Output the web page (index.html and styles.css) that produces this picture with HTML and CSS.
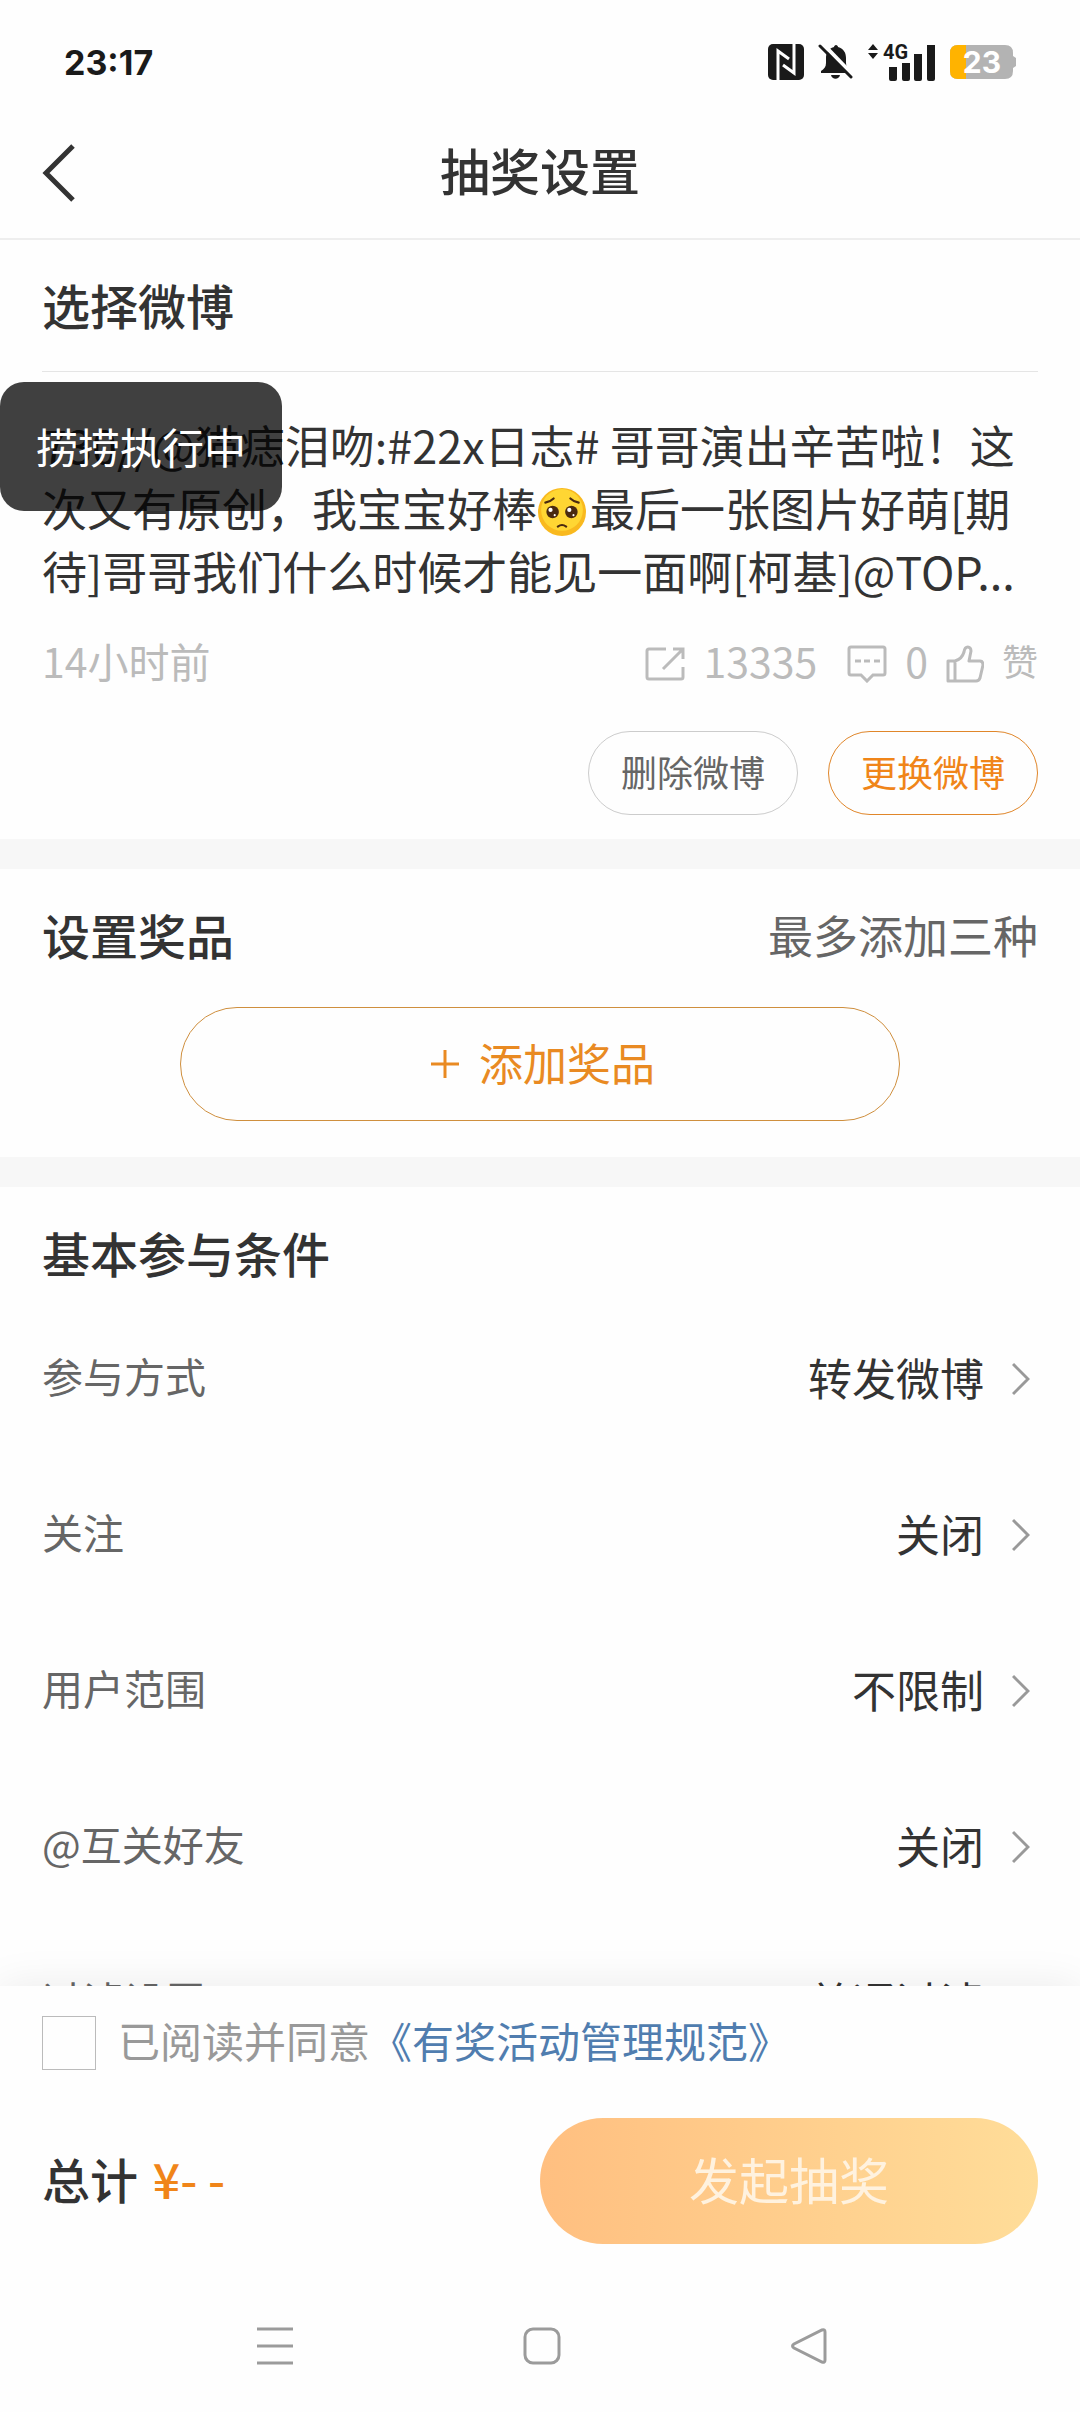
FILE: index.html
```html
<!DOCTYPE html>
<html lang="zh-CN">
<head>
    <meta charset="UTF-8">
    <meta name="viewport" content="width=device-width, initial-scale=1.0">
    <title>抽奖设置</title>
    <link rel="stylesheet" href="styles.css">
</head>
<body>
    <div class="status-bar">
        <span class="time">23:17</span>
        <div class="status-icons">
            <svg width="36" height="36" viewBox="0 0 36 36">
                <rect width="36" height="36" rx="5" fill="#1a1a1a"/>
                <path d="M10 36V7l11 8M26 0v29L15 21" fill="none" stroke="#fff" stroke-width="3"/>
            </svg>
            <svg width="36" height="36" viewBox="0 0 36 36">
                <path d="M18 1c1 0 2 1 2 2 6 2 8 6 8 11v5c0 4 2 6 5 8v2H3v-2c3-2 5-4 5-8v-5c0-5 2-9 8-11 0-1 1-2 2-2z" fill="#1a1a1a"/>
                <path d="M13 31h9c-1 5-8 5-9 0z" fill="#1a1a1a"/>
                <path d="M5 0l31 32" stroke="#fff" stroke-width="4"/>
                <path d="M2 2l31 31" stroke="#1a1a1a" stroke-width="3" stroke-linecap="round"/>
            </svg>
            <svg width="68" height="38" viewBox="0 0 68 38">
                <path d="M0 7l5-6 5 6zM0 10l5 6 5-6z" fill="#1a1a1a"/>
                <text x="15" y="16" class="network">4G</text>
                <path d="M21 24h8v12a2 2 0 0 1-2 2h-4a2 2 0 0 1-2-2zM34 20h8v16a2 2 0 0 1-2 2h-4a2 2 0 0 1-2-2zM46 11h8v25a2 2 0 0 1-2 2h-4a2 2 0 0 1-2-2zM59 2h8v34a2 2 0 0 1-2 2h-4a2 2 0 0 1-2-2z" fill="#1a1a1a"/>
            </svg>
            <svg width="66" height="36" viewBox="0 0 66 36">
                <path d="M8 1h47q8 0 8 8v3l3 2v8l-3 2v3q0 8-8 8H8q-8 0-8-8V9q0-8 8-8z" fill="#b3b3b3"/>
                <path d="M16 1H8Q0 1 0 9v18q0 8 8 8h8z" fill="#ffb300"/>
                <text x="32" y="29" class="battery-level">23</text>
            </svg>
        </div>
    </div>

    <header class="header">
        <button type="button" class="back-button" aria-label="返回">
            <svg width="34" height="58" viewBox="0 0 34 58">
                <path d="M31 2L4 29l27 27" fill="none" stroke="#333" stroke-width="5"/>
            </svg>
        </button>
        <h1>抽奖设置</h1>
    </header>

    <main>
        <section class="section">
            <h2 class="post-title">选择微博</h2>
            <p class="post-text">730//@猫痣泪吻:#22x日志# 哥哥演出辛苦啦！这<br>次又有原创，我宝宝好棒<svg class="emoji" width="48" height="48" viewBox="0 0 46 46" role="img" aria-label="🥺">
                <circle cx="23" cy="23" r="23" fill="#f9b91e"/>
                <circle cx="23" cy="21" r="20" fill="#ffd633"/>
                <circle cx="14" cy="23" r="6" fill="#4a2a10"/>
                <circle cx="32" cy="23" r="6" fill="#4a2a10"/>
                <circle cx="12" cy="21" r="2" fill="#fff"/>
                <circle cx="30" cy="21" r="2" fill="#fff"/>
                <circle cx="16" cy="26" r="1" fill="#fff"/>
                <circle cx="34" cy="26" r="1" fill="#fff"/>
                <path d="M7 14q5-1 8-4M39 14q-5-1-8-4M19 37q4-3 8 0" fill="none" stroke="#4a2a10" stroke-width="2" stroke-linecap="round"/>
            </svg>最后一张图片好萌[期<br>待]哥哥我们什么时候才能见一面啊[柯基]@TOP...</p>
            <div class="post-meta">
                <span>14小时前</span>
                <div class="post-counts">
                    <svg width="40" height="36" viewBox="0 0 40 36">
                        <path d="M21 3H4a2 2 0 0 0-2 2v26a2 2 0 0 0 2 2h32a2 2 0 0 0 2-2V21M28 3h10v10M38 3L18 23" fill="none" stroke="#bbb" stroke-width="3"/>
                    </svg>
                    <span class="reposts">13335</span>
                    <svg width="40" height="38" viewBox="0 0 40 38">
                        <path d="M4 2h32a2 2 0 0 1 2 2v24a2 2 0 0 1-2 2H26l-6 6-6-6H4a2 2 0 0 1-2-2V4a2 2 0 0 1 2-2z" fill="none" stroke="#bbb" stroke-width="3"/>
                        <path d="M8 16h6M17 16h6M27 16h6" stroke="#bbb" stroke-width="3"/>
                    </svg>
                    <span>0</span>
                    <svg width="38" height="38" viewBox="0 0 38 38">
                        <path d="M2 16h7v20H2zM9 16q7-2 9-9c1-7 7-6 7-1l-2 10h11q3 0 3 4l-3 13q-1 3-4 3H9" fill="none" stroke="#bbb" stroke-width="3" stroke-linejoin="round"/>
                    </svg>
                    <span class="like">赞</span>
                </div>
            </div>
            <div class="post-actions">
                <button type="button" class="pill">删除微博</button>
                <button type="button" class="pill orange">更换微博</button>
            </div>
        </section>

        <section class="section prizes">
            <div class="section-head">
                <h2>设置奖品</h2>
                <span>最多添加三种</span>
            </div>
            <button type="button" class="add-button">
                <svg width="28" height="28" viewBox="0 0 28 28">
                    <path d="M0 14h28M14 0v28" stroke="#e98a22" stroke-width="3"/>
                </svg>
                <span>添加奖品</span>
            </button>
        </section>

        <section class="section conditions">
            <h2>基本参与条件</h2>
            <button type="button" class="row">
                <span class="label">参与方式</span>
                <span class="value">转发微博</span>
                <svg width="18" height="34" viewBox="0 0 18 34"><path d="M1 2l15 15L1 32" fill="none" stroke="#999" stroke-width="3"/></svg>
            </button>
            <button type="button" class="row">
                <span class="label">关注</span>
                <span class="value">关闭</span>
                <svg width="18" height="34" viewBox="0 0 18 34"><path d="M1 2l15 15L1 32" fill="none" stroke="#999" stroke-width="3"/></svg>
            </button>
            <button type="button" class="row">
                <span class="label">用户范围</span>
                <span class="value">不限制</span>
                <svg width="18" height="34" viewBox="0 0 18 34"><path d="M1 2l15 15L1 32" fill="none" stroke="#999" stroke-width="3"/></svg>
            </button>
            <button type="button" class="row">
                <span class="label">@互关好友</span>
                <span class="value">关闭</span>
                <svg width="18" height="34" viewBox="0 0 18 34"><path d="M1 2l15 15L1 32" fill="none" stroke="#999" stroke-width="3"/></svg>
            </button>
            <button type="button" class="row">
                <span class="label">过滤设置</span>
                <span class="value">普通过滤</span>
                <svg width="18" height="34" viewBox="0 0 18 34"><path d="M1 2l15 15L1 32" fill="none" stroke="#999" stroke-width="3"/></svg>
            </button>
        </section>
    </main>

    <footer class="footer">
        <div class="agreement">
            <input type="checkbox" id="agree">
            <label for="agree">已阅读并同意<a href="#">《有奖活动管理规范》</a></label>
        </div>
        <div class="checkout">
            <div class="total">总计 <span>¥- -</span></div>
            <button type="button" class="submit-button">发起抽奖</button>
        </div>
        <nav class="system-nav">
            <button type="button" aria-label="最近任务">
                <svg width="38" height="38" viewBox="0 0 38 38"><path d="M1 2h36M1 19h36M1 36h36" stroke="#9b9b9b" stroke-width="3"/></svg>
            </button>
            <button type="button" aria-label="主屏幕">
                <svg width="38" height="38" viewBox="0 0 38 38"><rect x="2" y="2" width="34" height="34" rx="8" fill="none" stroke="#9b9b9b" stroke-width="3"/></svg>
            </button>
            <button type="button" aria-label="返回">
                <svg width="38" height="38" viewBox="0 0 38 38"><path d="M32 3q3-1 3 2v28q0 3-3 2L4 21q-3-2 0-4z" fill="none" stroke="#9b9b9b" stroke-width="3"/></svg>
            </button>
        </nav>
    </footer>

    <div class="toast" role="status">捞捞执行中</div>
</body>
</html>
```

FILE: styles.css
```css
* {
    box-sizing: border-box;
}

body {
    display: flex;
    flex-direction: column;
    height: 100vh;
    margin: 0;
    overflow: hidden;
    background-color: #fefefe;
    color: #333;
    font-family: "Noto Sans CJK SC", sans-serif;
}

h1,
h2,
p {
    margin: 0;
}

h1 {
    font-size: 50px;
    font-weight: 500;
}

h2 {
    font-size: 48px;
    font-weight: 500;
    line-height: 58px;
}

button {
    padding: 0;
    border: none;
    background: none;
    color: inherit;
    font-family: inherit;
    cursor: pointer;
}

svg {
    display: block;
    flex-shrink: 0;
}

/* Barre d'état */
.status-bar {
    display: flex;
    flex-shrink: 0;
    justify-content: space-between;
    align-items: center;
    height: 120px;
    padding: 4px 64px 0;
    color: #1a1a1a;
}

.time {
    font-family: Inter, sans-serif;
    font-size: 34px;
    font-weight: 700;
}

.status-icons {
    display: flex;
    align-items: center;
    gap: 14px;
}

.network {
    font-family: Roboto, sans-serif;
    font-size: 20px;
    font-weight: 700;
    fill: #1a1a1a;
}

.battery-level {
    font-family: Inter, sans-serif;
    font-size: 30px;
    font-weight: 700;
    text-anchor: middle;
    fill: #fff;
}

/* En-tête */
.header {
    display: flex;
    flex-shrink: 0;
    position: relative;
    justify-content: center;
    align-items: center;
    height: 120px;
    padding-bottom: 20px;
    border-bottom: 2px solid #eee;
}

.back-button {
    position: absolute;
    left: 42px;
    top: 24px;
}

main {
    flex: 1;
    min-height: 0;
    overflow: hidden;
}

.section {
    padding: 0 42px;
    border-bottom: 30px solid #f7f7f7;
}

/* Weibo */
.post-title {
    padding: 35px 0 38px;
    border-bottom: 1px solid #e5e5e5;
}

.post-text {
    padding: 41px 0 29px;
    font-size: 45px;
    line-height: 63px;
    white-space: nowrap;
}

.emoji {
    display: inline-block;
    margin: 0 4px 0 1px;
    vertical-align: -9px;
}

.post-meta {
    display: flex;
    justify-content: space-between;
    align-items: center;
    height: 66px;
    color: #bbb;
    font-size: 41px;
    line-height: 56px;
}

.post-meta span {
    padding-bottom: 8px;
}

.post-counts {
    display: flex;
    align-items: center;
    gap: 18px;
}

.reposts {
    margin-right: 12px;
}

.like {
    font-size: 36px;
}

.post-actions {
    display: flex;
    justify-content: flex-end;
    gap: 30px;
    padding: 34px 0 24px;
}

.pill {
    width: 210px;
    height: 84px;
    padding-bottom: 5px;
    border: 1px solid #ccc;
    border-radius: 42px;
    color: #666;
    font-size: 36px;
}

.pill.orange {
    border-color: #e0862a;
    color: #f08519;
}

/* Prix */
.prizes {
    padding-top: 36px;
    padding-bottom: 36px;
}

.section-head {
    display: flex;
    justify-content: space-between;
    align-items: flex-start;
}

.section-head span {
    color: #666;
    font-size: 45px;
    line-height: 60px;
}

.add-button {
    display: flex;
    justify-content: center;
    align-items: center;
    gap: 20px;
    width: 720px;
    max-width: 100%;
    height: 114px;
    margin: 42px auto 0;
    padding-left: 6px;
    border: 1px solid #cf8f3e;
    border-radius: 57px;
    color: #e98a22;
    font-size: 44px;
}

.add-button span {
    padding-bottom: 5px;
}

/* Conditions */
.conditions {
    padding-top: 36px;
}

.conditions h2 {
    margin-bottom: 20px;
}

.row {
    display: flex;
    align-items: center;
    width: 100%;
    height: 156px;
    padding-right: 8px;
}

.label {
    flex: 1;
    padding-bottom: 8px;
    color: #666;
    font-size: 41px;
    text-align: left;
}

.value {
    margin-right: 28px;
    padding-bottom: 4px;
    font-size: 44px;
}

/* Pied de page */
.footer {
    position: relative;
    flex-shrink: 0;
    padding: 30px 42px 0;
    background-color: #fefefe;
    box-shadow: 0 0 40px rgba(0, 0, 0, 0.08);
}

.agreement {
    display: flex;
    align-items: center;
    gap: 22px;
    color: #999;
    font-size: 42px;
    line-height: 48px;
}

.agreement input {
    appearance: none;
    width: 54px;
    height: 54px;
    margin: 0;
    border: 1px solid #bbb;
}

.agreement label {
    padding-bottom: 6px;
}

.agreement a {
    color: #507daf;
    text-decoration: none;
}

.checkout {
    display: flex;
    justify-content: space-between;
    align-items: center;
    margin-top: 48px;
}

.total {
    padding-bottom: 6px;
    font-size: 48px;
    font-weight: 500;
}

.total span {
    margin-left: 4px;
    color: #f08519;
}

.submit-button {
    width: 50%;
    height: 126px;
    padding-bottom: 6px;
    border-radius: 63px;
    background: linear-gradient(to right, #ffbf80, #ffdd99);
    color: #fff2df;
    font-size: 50px;
}

.system-nav {
    display: flex;
    justify-content: space-between;
    padding: 83px 210px 47px 214px;
}

/* Notification */
.toast {
    position: absolute;
    top: 382px;
    left: 0;
    padding: 34px 36px 35px;
    border-radius: 24px;
    background-color: rgba(0, 0, 0, 0.75);
    color: #fff;
    font-size: 42px;
    line-height: 60px;
}
```
